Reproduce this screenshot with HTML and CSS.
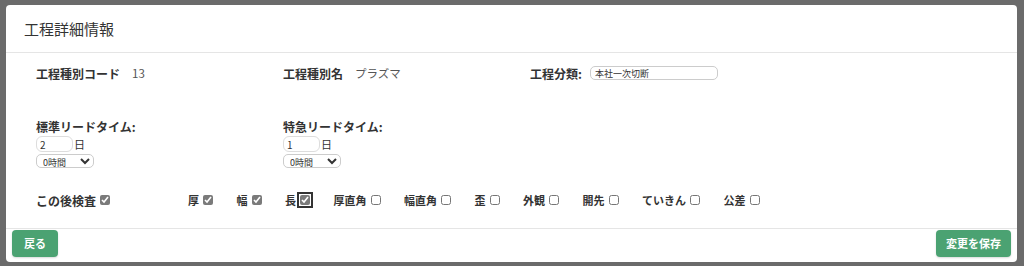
FILE: index.html
```html
<!DOCTYPE html>
<html lang="ja">

<head>
  <meta charset="UTF-8" />
  <title>工程詳細情報</title>
  <link rel="stylesheet" href="styles.css">
</head>

<body>
  <div class="modal">
    <div class="modal-header">
      <span class="title">工程詳細情報</span>
    </div>
    <div class="modal-body">
      <div class="row info">
        <div class="cell">
          <span class="label">工程種別コード</span><span class="value">13</span>
        </div>
        <div class="cell">
          <span class="label">工程種別名</span><span class="value">プラズマ</span>
        </div>
        <div class="cell">
          <span class="label">工程分類:</span><input type="text" class="text-input" value="本社一次切断" />
        </div>
      </div>

      <div class="row lead">
        <div class="cell">
          <div class="label">標準リードタイム:</div>
          <div class="days">
            <input type="text" class="num-input" value="2" />
            <span class="unit">日</span>
          </div>
          <select class="hours">
            <option>0時間</option>
          </select>
        </div>
        <div class="cell">
          <div class="label">特急リードタイム:</div>
          <div class="days">
            <input type="text" class="num-input" value="1" />
            <span class="unit">日</span>
          </div>
          <select class="hours">
            <option>0時間</option>
          </select>
        </div>
      </div>

      <div class="row checks">
        <label class="check main">この後検査<input type="checkbox" checked /></label>
        <label class="check">厚<input type="checkbox" checked /></label>
        <label class="check">幅<input type="checkbox" checked /></label>
        <label class="check">長<input type="checkbox" class="focused" checked /></label>
        <label class="check">厚直角<input type="checkbox" /></label>
        <label class="check">幅直角<input type="checkbox" /></label>
        <label class="check">歪<input type="checkbox" /></label>
        <label class="check">外観<input type="checkbox" /></label>
        <label class="check">開先<input type="checkbox" /></label>
        <label class="check">ていきん<input type="checkbox" /></label>
        <label class="check">公差<input type="checkbox" /></label>
      </div>
    </div>
    <div class="modal-footer">
      <span class="btn back">戻る</span>
      <span class="btn">変更を保存</span>
    </div>
  </div>
</body>

</html>
```

FILE: styles.css
```css
* {
  margin: 0;
  padding: 0;
  box-sizing: border-box;
}

body {
  width: 1024px;
  height: 266px;
  overflow: hidden;
  background-color: #6b6b6b;
  font-family: "Noto Sans CJK JP", "Noto Sans", sans-serif;
  color: #333;
  padding: 5px 7px 0 6px;
}

.modal {
  background: #fff;
  border-radius: 4px;
  height: 257px;
  display: flex;
  flex-direction: column;
}

.modal-header {
  height: 48px;
  padding: 0 18px;
  display: flex;
  align-items: center;
  border-bottom: 1px solid #e5e5e5;
}

.modal-header>.title {
  font-size: 15px;
  color: #333;
}

/**
 * body
 */
.modal-body {
  flex: 1;
  padding: 10px 30px 0;
}

.row {
  display: flex;
}

.cell {
  width: 247px;
}

.label {
  font-size: 12px;
  font-weight: bold;
  color: #333;
}

.info {
  height: 20px;
  align-items: center;
}

.info .cell {
  display: flex;
  align-items: center;
}

.info .value {
  font-size: 11.5px;
  color: #555;
  margin-left: 12px;
}

.text-input {
  width: 128px;
  height: 14px;
  margin-left: 8px;
  border: 1px solid #ccc;
  border-radius: 5px;
  padding: 0 4px;
  font-size: 9px;
  font-family: inherit;
  color: #333;
}

.lead {
  margin-top: 35px;
}

.lead .label {
  line-height: 18px;
}

.days {
  display: flex;
  align-items: center;
  height: 16px;
}

.num-input {
  width: 37px;
  height: 16px;
  border: 1px solid #ddd;
  border-radius: 6px;
  padding: 0 3px;
  font-size: 10px;
  font-family: inherit;
  color: #333;
}

.unit {
  font-size: 11px;
  margin-left: 1px;
}

.hours {
  display: block;
  margin-top: 2px;
  width: 58px;
  height: 14px;
  border: 1px solid #ccc;
  border-radius: 5px;
  background: #fff;
  font-size: 9px;
  font-family: inherit;
  color: #333;
  padding: 0 2px;
}

/**
 * checks
 */
.checks {
  margin-top: 22px;
  height: 20px;
  align-items: center;
  gap: 23.5px;
}

.check {
  font-size: 11px;
  font-weight: bold;
  color: #333;
  display: flex;
  align-items: center;
}

.check.main {
  font-size: 12px;
  width: 128.5px;
}

.check input {
  width: 10px;
  height: 10px;
  margin-left: 4px;
  accent-color: #7a7a7a;
}

.check input.focused {
  outline: 2px solid #333;
  outline-offset: 1px;
  border-radius: 2px;
}

/**
 * footer
 */
.modal-footer {
  border-top: 1px solid #e5e5e5;
  padding: 1px 6px 5px;
  display: flex;
  justify-content: space-between;
}

.btn {
  height: 27px;
  padding: 0 10px;
  line-height: 27px;
  border-radius: 4px;
  background-color: #4ba272;
  color: #fff;
  font-size: 11px;
  font-weight: bold;
  box-shadow: 0 1px 2px rgba(0, 0, 0, 0.15);
}

.btn.back {
  padding: 0 12px;
}
```
